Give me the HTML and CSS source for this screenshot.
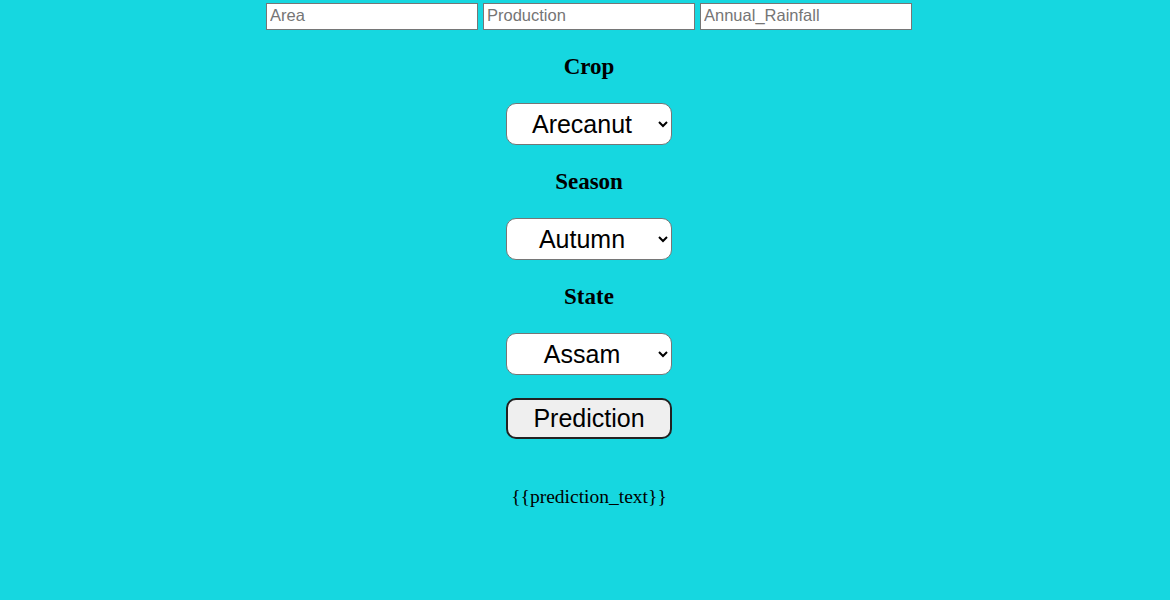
FILE: index.html
```html
<!DOCTYPE html>
<html>
<head>
<meta charset="utf-8">
<link rel="stylesheet" href="styles.css">
</head>
<body>
<div class="page">
  <form class="form">
    <div class="inputs">
      <input class="field" type="text" placeholder="Area">
      <input class="field" type="text" placeholder="Production">
      <input class="field" type="text" placeholder="Annual_Rainfall">
    </div>
    <label class="label">Crop</label>
    <select class="choice"><option>Arecanut</option></select>
    <label class="label">Season</label>
    <select class="choice"><option>Autumn</option></select>
    <label class="label">State</label>
    <select class="choice"><option>Assam</option></select>
    <button class="btn" type="button">Prediction</button>
  </form>
  <div class="result">{{prediction_text}}</div>
</div>
</body>
</html>
```

FILE: styles.css
```css
html, body {
  margin: 0;
  padding: 0;
  background: #16d7e0;
}
.page {
  height: 600px;
  padding: 3px 0 0 8px;
  box-sizing: border-box;
  display: flex;
  flex-direction: column;
  align-items: center;
  font-family: "Liberation Serif", serif;
  color: #000;
}
.form {
  display: flex;
  flex-direction: column;
  align-items: center;
}
.inputs {
  display: flex;
  gap: 5px;
}
.field {
  width: 212px;
  height: 27px;
  box-sizing: border-box;
  margin: 0;
  padding: 0 3px 2px;
  border: 1px solid #767676;
  border-radius: 0;
  background: #fff;
  font-family: "Liberation Sans", Arial, sans-serif;
  font-size: 16.5px;
}
.field::placeholder {
  color: #757575;
}
.label {
  display: block;
  margin-top: 24px;
  font-size: 23px;
  font-weight: bold;
  line-height: 25px;
}
.choice {
  margin-top: 24px;
  width: 166px;
  height: 42px;
  box-sizing: border-box;
  border: 1px solid #767676;
  border-radius: 10px;
  background: #fff;
  font-family: "Liberation Sans", Arial, sans-serif;
  font-size: 25px;
  text-align: center;
  text-align-last: center;
  color: #000;
  padding: 0 2px 0 0;
}
.btn {
  margin-top: 23px;
  width: 166px;
  height: 41px;
  box-sizing: border-box;
  border: 2px solid #222;
  border-radius: 10px;
  background: #efefef;
  font-family: "Liberation Sans", Arial, sans-serif;
  font-size: 25px;
  color: #000;
  padding: 0;
}
.result {
  margin-top: 47px;
  font-size: 19.5px;
  line-height: 22px;
}
```
